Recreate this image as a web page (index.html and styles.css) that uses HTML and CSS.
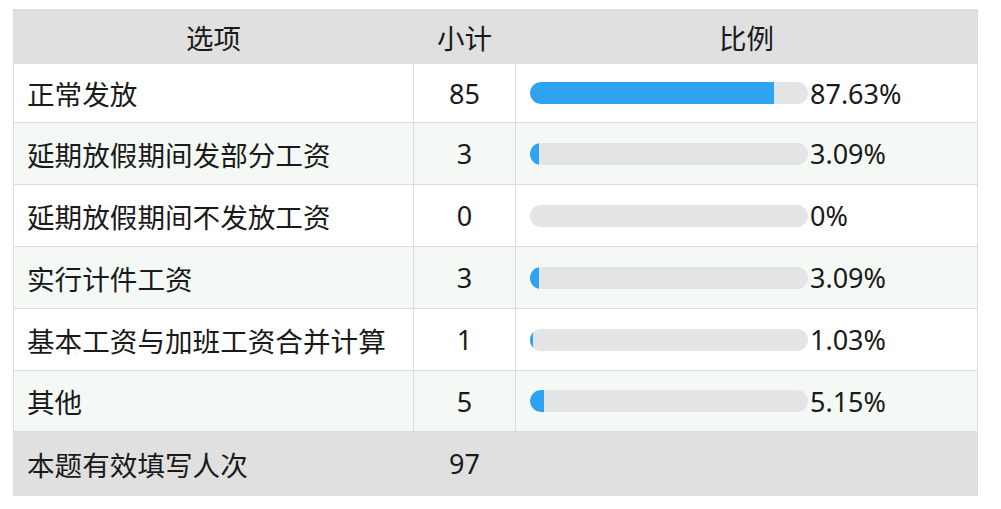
FILE: index.html
```html
<!DOCTYPE html>
<html lang="zh">
<head>
<meta charset="utf-8">
<link rel="stylesheet" href="styles.css">
</head>
<body>
<table class="result">
  <colgroup>
    <col class="c-opt"><col class="c-cnt"><col class="c-pct">
  </colgroup>
  <thead>
    <tr class="head"><th>选项</th><th>小计</th><th>比例</th></tr>
  </thead>
  <tbody>
    <tr class="row first"><td class="opt">正常发放</td><td class="cnt">85</td><td><div class="ratio"><div class="track"><div class="fill" style="width:87.63%"></div></div><span class="pct">87.63%</span></div></td></tr>
    <tr class="row alt"><td class="opt">延期放假期间发部分工资</td><td class="cnt">3</td><td><div class="ratio"><div class="track"><div class="fill" style="width:3.09%"></div></div><span class="pct">3.09%</span></div></td></tr>
    <tr class="row"><td class="opt">延期放假期间不发放工资</td><td class="cnt">0</td><td><div class="ratio"><div class="track"><div class="fill" style="width:0%"></div></div><span class="pct">0%</span></div></td></tr>
    <tr class="row alt"><td class="opt">实行计件工资</td><td class="cnt">3</td><td><div class="ratio"><div class="track"><div class="fill" style="width:3.09%"></div></div><span class="pct">3.09%</span></div></td></tr>
    <tr class="row"><td class="opt">基本工资与加班工资合并计算</td><td class="cnt">1</td><td><div class="ratio"><div class="track"><div class="fill" style="width:1.03%"></div></div><span class="pct">1.03%</span></div></td></tr>
    <tr class="row alt last"><td class="opt">其他</td><td class="cnt">5</td><td><div class="ratio"><div class="track"><div class="fill" style="width:5.15%"></div></div><span class="pct">5.15%</span></div></td></tr>
  </tbody>
  <tfoot>
    <tr class="foot"><td class="opt">本题有效填写人次</td><td class="cnt">97</td><td></td></tr>
  </tfoot>
</table>
</body>
</html>
```
FILE: styles.css
```css
html, body {
  margin: 0;
  background: #ffffff;
}
body {
  padding: 9px 0 0 13px;
  font-family: "Noto Sans", "Noto Sans CJK SC", sans-serif;
  color: #1a1a1a;
}
.result {
  border-collapse: collapse;
  table-layout: fixed;
  width: 964px;
  font-size: 27px;
}
.c-opt { width: 400px; }
.c-cnt { width: 102px; }
.c-pct { width: 462px; }
.result th, .result td {
  border: 1px solid #dcdcdc;
  padding: 0;
  font-weight: normal;
}
.head th {
  height: 53px;
  background: #e0e0e0;
  text-align: center;
  font-size: 27.5px;
}
.row td {
  height: 61px;
  background: #ffffff;
}
.row.first td {
  height: 58px;
}
.row.last td {
  height: 60px;
}
.row.alt td {
  background: #f5f9f6;
}
.opt {
  padding-left: 13px !important;
  text-align: left;
  white-space: nowrap;
  font-size: 27.6px;
}
.cnt {
  text-align: center;
}
.ratio {
  display: flex;
  align-items: center;
  padding-left: 14px;
}
.track {
  width: 278px;
  height: 22px;
  border-radius: 11px;
  background: #e4e4e6;
  overflow: hidden;
}
.fill {
  height: 100%;
  background: #2ea3f2;
  border-radius: 11px 0 0 11px;
}
.pct {
  margin-left: 2px;
}
.foot td {
  height: 63px;
  background: #e0e0e0;
}
```
